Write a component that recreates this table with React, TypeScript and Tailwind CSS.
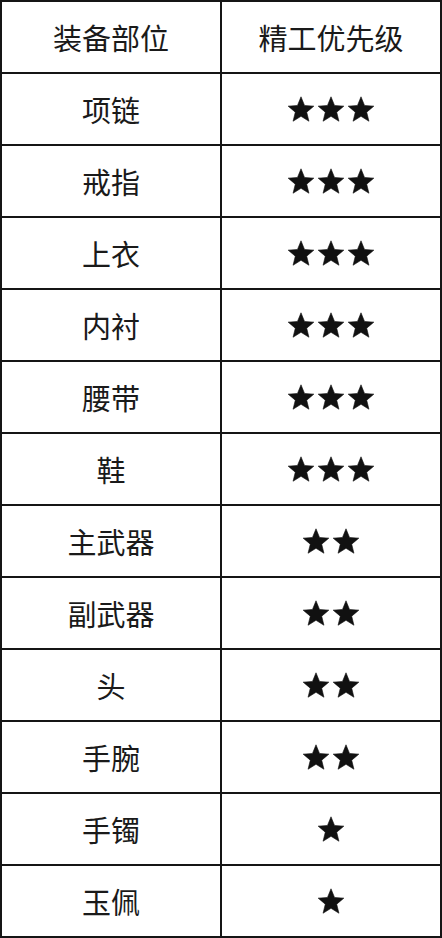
const rows: [string, number][] = [
  ["项链", 3],
  ["戒指", 3],
  ["上衣", 3],
  ["内衬", 3],
  ["腰带", 3],
  ["鞋", 3],
  ["主武器", 2],
  ["副武器", 2],
  ["头", 2],
  ["手腕", 2],
  ["手镯", 1],
  ["玉佩", 1],
];

function Star() {
  return (
    <svg viewBox="0 0 26 26" className="w-[26px] h-[26px]">
      <polygon
        points="13,0.8 16.53,9.45 25.84,10.13 18.71,16.15 20.94,25.22 13,20.3 5.06,25.22 7.29,16.15 0.16,10.13 9.47,9.45"
        fill="#111111"
        stroke="#111111"
        strokeWidth="0.6"
        strokeLinejoin="round"
      />
    </svg>
  );
}

function Cell({ children }: { children: React.ReactNode }) {
  return (
    <div className="h-[72px] flex items-center justify-center border-r-2 border-b-2 border-[#151515]">
      {children}
    </div>
  );
}

export default function App() {
  return (
    <div
      className="w-[442px] h-[938px] bg-white text-[#1a1a1a]"
      style={{ fontFamily: '"Noto Sans CJK SC", "Noto Sans", sans-serif' }}
    >
      <div className="grid grid-cols-2 border-l-2 border-t-2 border-[#151515]">
        <Cell>
          <span className="text-[29px] leading-none">装备部位</span>
        </Cell>
        <Cell>
          <span className="text-[29px] leading-none">精工优先级</span>
        </Cell>
        {rows.map(([name, n]) => (
          <div key={name} className="contents">
            <Cell>
              <span className="text-[29px] leading-none">{name}</span>
            </Cell>
            <Cell>
              <div className="flex gap-[4px]">
                {Array.from({ length: n }).map((_, i) => (
                  <Star key={i} />
                ))}
              </div>
            </Cell>
          </div>
        ))}
      </div>
    </div>
  );
}
